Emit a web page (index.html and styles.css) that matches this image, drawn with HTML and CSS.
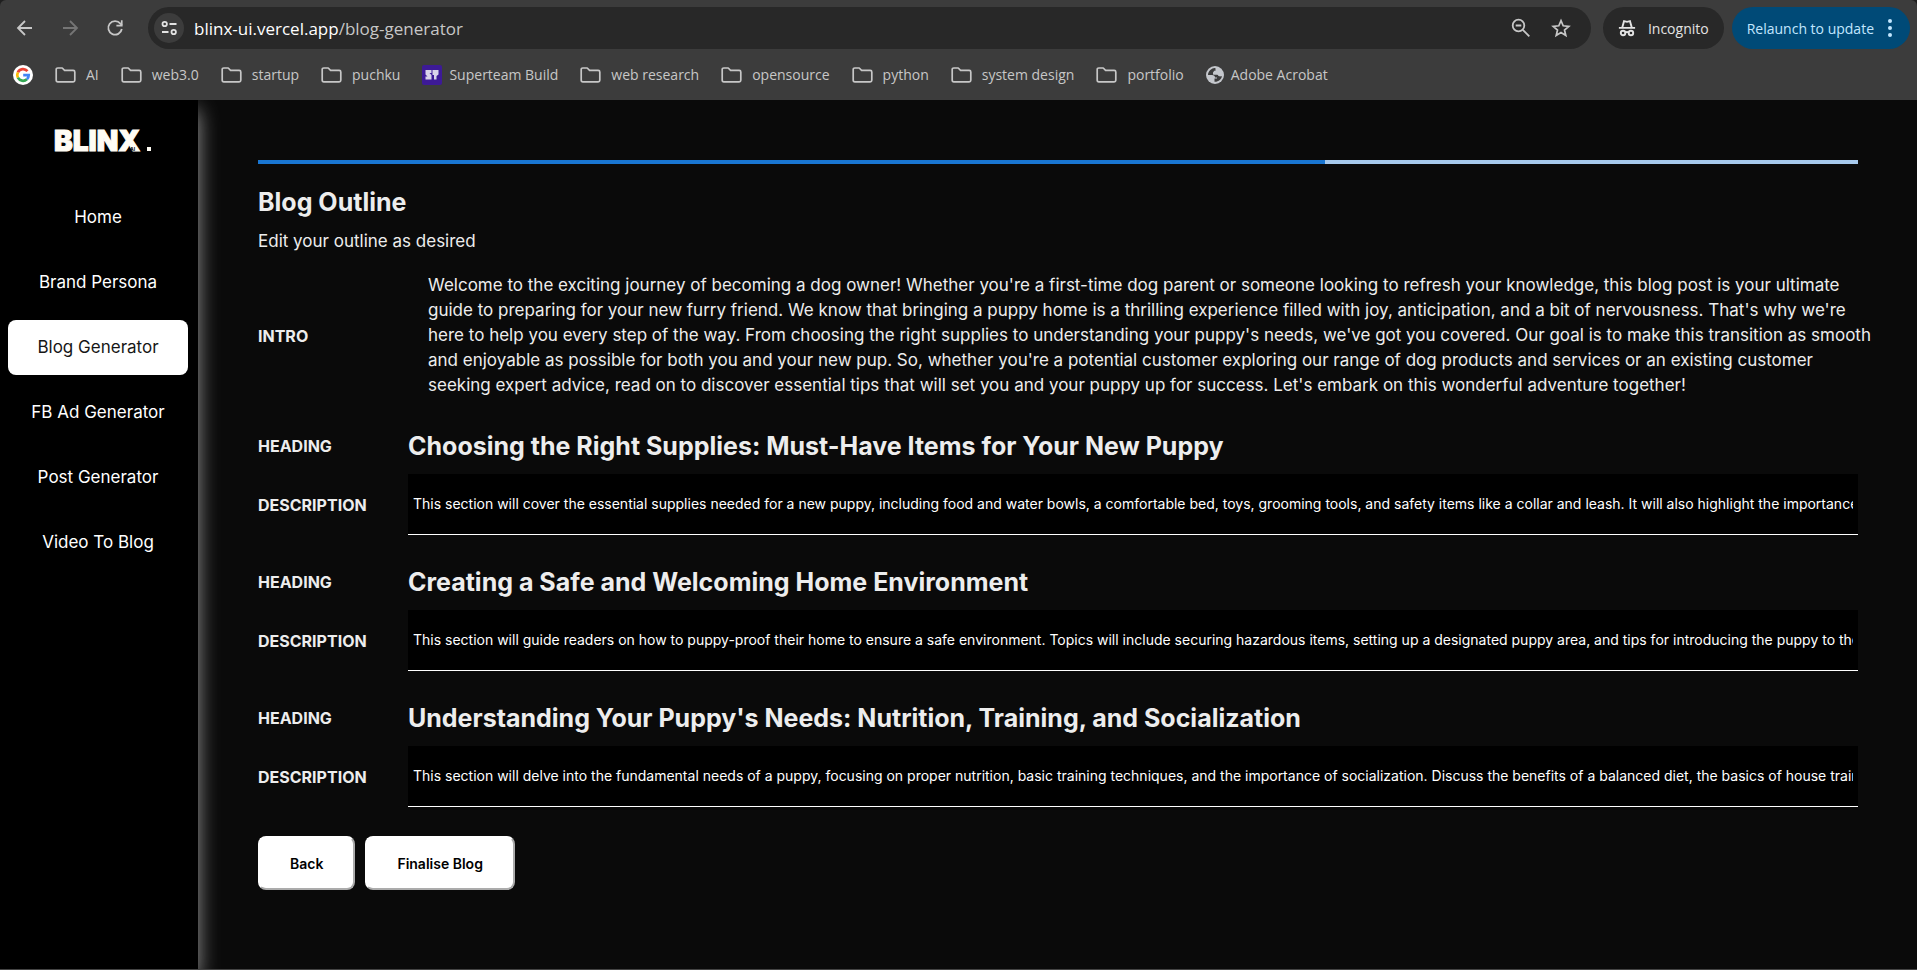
FILE: index.html
```html
<!DOCTYPE html>
<html lang="en">
<head>
<meta charset="utf-8">
<title>Blinx - Blog Generator</title>
<link rel="stylesheet" href="styles.css">
</head>
<body>
<svg width="0" height="0" class="sprite" aria-hidden="true">
  <symbol id="folder" viewBox="0 0 21 16"><path d="M1.2 2.6Q1.2 1 2.8 1H7.2L9.6 3.4H18.2Q19.8 3.4 19.8 5V13.2Q19.8 14.8 18.2 14.8H2.8Q1.2 14.8 1.2 13.2Z" fill="none" stroke="currentColor" stroke-width="1.7" stroke-linejoin="round"/></symbol>
</svg>
<div class="page">
  <header class="browser">
    <div class="toolbar">
      <button class="tool" aria-label="Back"><svg width="24" height="24" viewBox="0 0 24 24"><path d="M19 12H6M12 5l-7 7 7 7" fill="none" stroke="currentColor" stroke-width="1.8"/></svg></button>
      <button class="tool tool-off" aria-label="Forward"><svg width="24" height="24" viewBox="0 0 24 24"><path d="M5 12h13M12 5l7 7-7 7" fill="none" stroke="currentColor" stroke-width="1.8"/></svg></button>
      <button class="tool" aria-label="Reload"><svg width="24" height="24" viewBox="0 0 24 24"><path d="M18.8 13A6.8 6.8 0 1 1 17.4 7.600L19 9.300" fill="none" stroke="currentColor" stroke-width="1.800"/><path d="M19.600 4.300V10.400H13.400V8.700H17.900V4.300Z" fill="currentColor"/></svg></button>
      <div class="omnibox">
        <button class="site-info" aria-label="Site information"><svg width="18" height="18" viewBox="0 0 18 18"><g fill="none" stroke="currentColor" stroke-width="1.800"><circle cx="4.700" cy="5" r="2.200"/><path d="M9.500 5H16.500M2 13H8.500"/><circle cx="13.700" cy="13" r="2.200"/></g></svg></button>
        <span class="url"><span class="host">blinx-ui.vercel.app</span>/blog-generator</span>
        <button class="tool" aria-label="Zoom"><svg width="24" height="24" viewBox="0 0 24 24"><g fill="none" stroke="currentColor" stroke-width="1.800"><circle cx="9.500" cy="9.500" r="5.800"/><path d="M6.700 9.500h5.600M13.800 13.800L20.300 20.300"/></g></svg></button>
        <button class="tool" aria-label="Bookmark this tab"><svg width="24" height="24" viewBox="0 0 24 24"><path d="M12 4.600L14.200 9.800L19.800 10.300L15.500 14L16.800 19.500L12 16.600L7.200 19.500L8.500 14L4.200 10.300L9.800 9.800Z" fill="none" stroke="currentColor" stroke-width="1.700"/></svg></button>
      </div>
      <button class="chip incognito"><svg width="18" height="18" viewBox="0 0 20 20"><path d="M1 9.800h18M4.800 9.300L6.700 2.400L10 3.200L13.300 2.400L15.200 9.300" fill="none" stroke="currentColor" stroke-width="2.100"/><g fill="none" stroke="currentColor" stroke-width="2.100"><circle cx="5.600" cy="15.500" r="2.500"/><circle cx="14.400" cy="15.500" r="2.500"/><path d="M8 15Q10 14 12 15"/></g></svg>Incognito</button>
      <button class="chip relaunch">Relaunch to update<svg width="6" height="20" viewBox="0 0 6 20" fill="currentColor"><circle cx="3" cy="3" r="2"/><circle cx="3" cy="10" r="2"/><circle cx="3" cy="17" r="2"/></svg></button>
    </div>
    <nav class="bookmarks" aria-label="Bookmarks">
      <a href="#" aria-label="Google"><svg width="20" height="20" viewBox="0 0 20 20"><circle cx="10" cy="10" r="10" fill="#fff"/><g fill="none" stroke-width="2.700"><path d="M14.500 6.200A5.800 5.800 0 0 0 4.900 7.300" stroke="#ea4335"/><path d="M4.900 7.300A5.800 5.800 0 0 0 4.900 12.700" stroke="#fbbc05"/><path d="M4.900 12.700A5.800 5.800 0 0 0 13.900 14.300" stroke="#34a853"/><path d="M13.900 14.300A5.800 5.800 0 0 0 15.700 10.200H10.200" stroke="#4285f4"/></g></svg></a>
      <a href="#"><svg width="21" height="16"><use href="#folder"/></svg>AI</a>
      <a href="#"><svg width="21" height="16"><use href="#folder"/></svg>web3.0</a>
      <a href="#"><svg width="21" height="16"><use href="#folder"/></svg>startup</a>
      <a href="#"><svg width="21" height="16"><use href="#folder"/></svg>puchku</a>
      <a href="#" class="site"><svg width="20" height="20" viewBox="0 0 20 20"><rect width="20" height="20" rx="2" fill="#3d1a97"/><path d="M4 5H9.500V8H7.500L9.500 10V14.500H3.500V11.500H5.500L3.500 9.500V5ZM10.500 5H16.500V9.500L14.500 11V14.500H12V10H10.500Z" fill="#d9d3ea"/></svg>Superteam Build</a>
      <a href="#"><svg width="21" height="16"><use href="#folder"/></svg>web research</a>
      <a href="#"><svg width="21" height="16"><use href="#folder"/></svg>opensource</a>
      <a href="#"><svg width="21" height="16"><use href="#folder"/></svg>python</a>
      <a href="#"><svg width="21" height="16"><use href="#folder"/></svg>system design</a>
      <a href="#"><svg width="21" height="16"><use href="#folder"/></svg>portfolio</a>
      <a href="#" class="site"><svg width="18" height="18" viewBox="0 0 18 18"><circle cx="9" cy="9" r="9" fill="#c4c7cc"/><path d="M8.500 2C6 2 2 5 2 9H6C8 9 9 10 9 11.500H11V12.500H8.500V15.800C12 16.200 16 13 16 9.500C15 10.500 14.500 10 13.500 10C12 10 12.500 8.500 11 8.500H7.500V6.500H8.500C9.500 6.500 9.500 5.500 9.500 5H11.500C12.500 4.500 12.500 3.500 12 2.900C11 2.200 9.800 2 8.500 2Z" fill="#3c3c3c"/><path d="M9.500 1.500V4.800H8C7.500 5.500 8 6 7 6.500V8.500H11.500L13 10.200H16.500V8C16 4.500 13.500 2 9.500 1.500Z" fill="#c4c7cc"/></svg>Adobe Acrobat</a>
    </nav>
  </header>

  <div class="app">
    <aside class="sidebar">
      <a class="logo" href="#" aria-label="Blinx"><svg width="110" height="36" viewBox="0 0 110 36"><text class="logo-word" x="0" y="26">BLINX</text><rect x="93" y="22" width="4" height="4" fill="#fffcf4"/><text class="logo-ai" x="76" y="26">AI</text></svg></a>
      <nav class="menu" aria-label="Main">
        <a href="#">Home</a>
        <a href="#">Brand Persona</a>
        <a href="#" class="active" aria-current="page">Blog Generator</a>
        <a href="#">FB Ad Generator</a>
        <a href="#">Post Generator</a>
        <a href="#">Video To Blog</a>
      </nav>
    </aside>

    <main class="content">
      <div class="progress" role="progressbar" aria-label="Progress" aria-valuemin="0" aria-valuemax="3" aria-valuenow="2"><div class="progress-fill"></div></div>
      <h1 class="title">Blog Outline</h1>
      <p class="subtitle">Edit your outline as desired</p>

      <section class="intro">
        <h2 class="label">INTRO</h2>
        <p class="intro-text">Welcome to the exciting journey of becoming a dog owner! Whether you're a first-time dog parent or someone looking to refresh your knowledge, this blog post is your ultimate<br>guide to preparing for your new furry friend. We know that bringing a puppy home is a thrilling experience filled with joy, anticipation, and a bit of nervousness. That's why we're<br>here to help you every step of the way. From choosing the right supplies to understanding your puppy's needs, we've got you covered. Our goal is to make this transition as smooth<br>and enjoyable as possible for both you and your new pup. So, whether you're a potential customer exploring our range of dog products and services or an existing customer<br>seeking expert advice, read on to discover essential tips that will set you and your puppy up for success. Let's embark on this wonderful adventure together!</p>
      </section>

      <form class="outline">
        <section class="entry">
          <span class="label">HEADING</span>
          <h2 class="heading">Choosing the Right Supplies: Must-Have Items for Your New Puppy</h2>
          <label class="label" for="d1">DESCRIPTION</label>
          <input class="desc" id="d1" type="text" value="This section will cover the essential supplies needed for a new puppy, including food and water bowls, a comfortable bed, toys, grooming tools, and safety items like a collar and leash. It will also highlight the importance of quality.">
        </section>
        <section class="entry">
          <span class="label">HEADING</span>
          <h2 class="heading">Creating a Safe and Welcoming Home Environment</h2>
          <label class="label" for="d2">DESCRIPTION</label>
          <input class="desc" id="d2" type="text" value="This section will guide readers on how to puppy-proof their home to ensure a safe environment. Topics will include securing hazardous items, setting up a designated puppy area, and tips for introducing the puppy to the home.">
        </section>
        <section class="entry">
          <span class="label">HEADING</span>
          <h2 class="heading">Understanding Your Puppy's Needs: Nutrition, Training, and Socialization</h2>
          <label class="label" for="d3">DESCRIPTION</label>
          <input class="desc" id="d3" type="text" value="This section will delve into the fundamental needs of a puppy, focusing on proper nutrition, basic training techniques, and the importance of socialization. Discuss the benefits of a balanced diet, the basics of house training.">
        </section>
        <div class="actions">
          <button type="button" class="btn">Back</button>
          <button type="button" class="btn">Finalise Blog</button>
        </div>
      </form>
    </main>
  </div>
</div>
</body>
</html>
```

FILE: styles.css
```css
* { box-sizing: border-box; }

body {
  margin: 0;
  background: #1f1f1f;
  color: #ededed;
  font-family: Inter, "Open Sans", sans-serif;
  font-size: 17px;
}

h1, h2, p { margin: 0; }
a { color: inherit; text-decoration: none; }
button, input { font-family: inherit; }
.sprite { position: absolute; }

.page {
  display: flex;
  flex-direction: column;
  min-height: 100vh;
}

/* Browser bars */
.browser {
  display: flex;
  flex-direction: column;
  height: 100px;
  padding-top: 7px;
  background: #3c3c3c;
  border-radius: 6px 6px 0 0;
  font-family: "Open Sans", "Noto Sans", sans-serif;
  font-size: 14px;
}

.toolbar {
  display: flex;
  align-items: center;
  height: 42px;
  padding: 0 7px 0 13px;
}

.tool {
  display: flex;
  padding: 0;
  margin-right: 21px;
  border: 0;
  background: none;
  color: #c7c7c7;
}
.tool-off { color: #757575; }

.omnibox {
  display: flex;
  flex: 1;
  align-items: center;
  height: 42px;
  margin-right: 12px;
  padding: 0 18px 0 6px;
  border-radius: 21px;
  background: #282828;
}
.omnibox .tool { margin: 0 0 0 16px; }

.site-info {
  display: grid;
  place-items: center;
  width: 30px;
  height: 30px;
  padding: 0;
  border: 0;
  border-radius: 50%;
  background: #3c3c3c;
  color: #e3e3e3;
}

.url {
  flex: 1;
  margin-left: 10px;
  color: #c7c7c7;
  font-size: 17px;
}
.host { color: #fff; }

.chip {
  display: flex;
  align-items: center;
  height: 42px;
  border: 0;
  border-radius: 21px;
  font-size: 14px;
  white-space: nowrap;
}
.incognito {
  gap: 12px;
  margin-right: 8px;
  padding: 0 15px;
  background: #282828;
  color: #e3e3e3;
}
.relaunch {
  gap: 13px;
  padding: 0 17px 0 15px;
  background: #004a77;
  color: #c2e7ff;
}

.bookmarks {
  display: flex;
  flex: 1;
  align-items: center;
  gap: 22px;
  padding: 0 13px;
  color: #c7c7c7;
}
.bookmarks a {
  display: flex;
  align-items: center;
  gap: 10px;
  white-space: nowrap;
}
.bookmarks .site { gap: 7px; }

/* Application */
.app {
  display: flex;
  flex: 1;
  border-bottom: 1px solid #444;
  background: #0a0a0a;
}

.sidebar {
  flex: none;
  width: 198px;
  padding: 25px 10px 0 8px;
  background: #000;
  box-shadow: 0 10px 20px #9a9a9a;
  clip-path: inset(0 -40px 0 0);
}

.logo {
  display: block;
  margin-left: 46px;
}
.logo svg { display: block; }
.logo-word {
  fill: #fffcf4;
  stroke: #fffcf4;
  stroke-width: 1px;
  font-size: 28px;
  font-weight: 900;
}
.logo-ai {
  fill: #000;
  font-size: 5px;
  font-weight: 700;
}

.menu {
  display: flex;
  flex-direction: column;
  gap: 10px;
  margin-top: 29px;
}
.menu a {
  height: 55px;
  border-radius: 8px;
  color: #fff;
  line-height: 55px;
  text-align: center;
}
.menu .active {
  background: #fff;
  color: #171717;
}

.content {
  flex: 1;
  min-width: 0;
  padding: 60px 59px 60px 60px;
}

.progress {
  height: 4px;
  background: #a7caed;
}
.progress-fill {
  width: 66.67%;
  height: 100%;
  background: #1976d2;
}

.title {
  margin-top: 20px;
  font-size: 25px;
  font-weight: 700;
  line-height: 36px;
}
.subtitle {
  margin-top: 9px;
  line-height: 24px;
}

.intro,
.entry {
  display: grid;
  grid-template-columns: 150px 1fr;
  align-items: center;
}
.intro { margin-top: 20px; }
.intro-text {
  padding-left: 20px;
  line-height: 25px;
  white-space: nowrap;
}

.label {
  font-size: 16px;
  font-weight: 700;
}

.outline { margin-top: 30px; }
.entry {
  row-gap: 10px;
  margin-bottom: 29px;
}
.heading {
  font-size: 25px;
  font-weight: 700;
  line-height: 36px;
}
.desc {
  width: 100%;
  height: 61px;
  padding: 0 5px 2px;
  border: 0;
  border-bottom: 1px solid #fff;
  background: #000;
  color: #fff;
  font-size: 14px;
}

.actions {
  display: flex;
  gap: 10px;
}
.btn {
  height: 54px;
  padding: 0 30px;
  border: 2px outset #fff;
  border-radius: 8px;
  background: #fff;
  color: #000;
  font-size: 14px;
  font-weight: 600;
}
```
